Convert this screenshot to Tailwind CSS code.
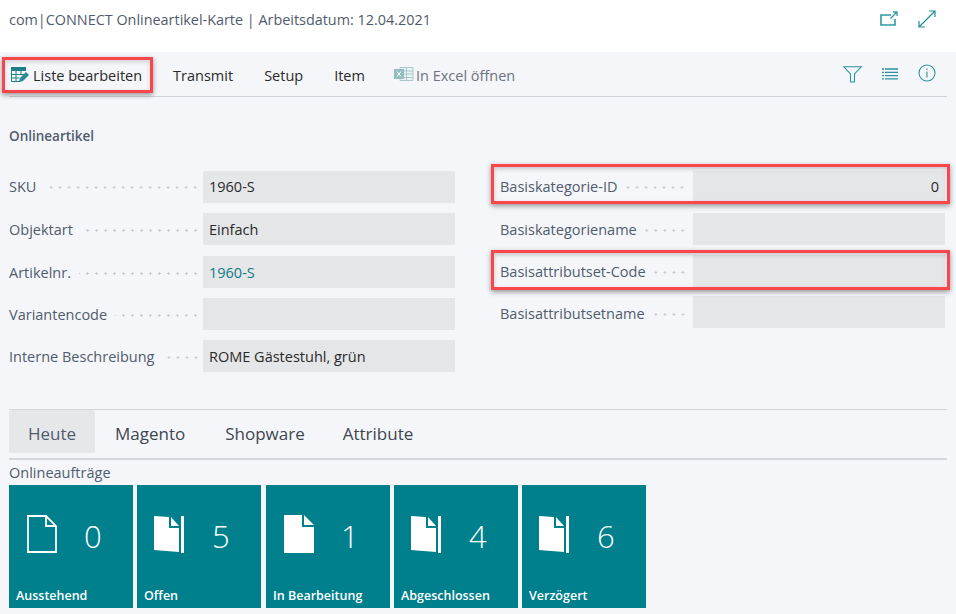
<!DOCTYPE html>
<html lang="de">
<head>
  <meta charset="UTF-8" />
  <title>com|CONNECT Onlineartikel-Karte</title>
  <script src="https://cdn.jsdelivr.net/npm/@tailwindcss/browser@4"></script>
</head>
<body class="relative w-[956px] h-[614px] overflow-hidden bg-[#f5f6f9] font-['Open_Sans','Noto_Sans',sans-serif] text-[14.5px] text-[#2a2a2a]">

<!-- Kopf -->
<header class="h-[52px] bg-white flex items-start justify-between pl-[9px] pr-[20px] pt-[9px]">
  <h1 class="text-[14.400px] leading-[22px] text-[#505c6d]">com|CONNECT Onlineartikel-Karte | Arbeitsdatum: 12.04.2021</h1>
  <div class="flex items-center gap-[20px] pt-[1px]">
    <svg width="18" height="16" viewBox="0 0 18 16" fill="none" stroke="#2f9aa3" stroke-width="1.3">
      <path d="M11 4H1v10h14V8" stroke-width="1.6"/><path d="M10.5 7.5 16.5 1.5M13 1h4v4"/>
    </svg>
    <svg width="18" height="18" viewBox="0 0 18 18" fill="none" stroke="#1f8f99" stroke-width="1.2">
      <path d="M1 17 17 1M11 1h6v6M1 11v6h6"/>
    </svg>
  </div>
</header>

<!-- Aktionsleiste -->
<nav class="mx-[9px] h-[45px] border-b border-[#d0d3da] flex items-center justify-between">
  <div class="flex items-center pt-[3px]">
    <button class="flex items-center gap-[4px] mr-[31px] ml-[2px]">
      <svg width="18" height="16" viewBox="0 0 18 16" fill="none" class="mb-[2px]">
        <path d="M0 0h15v4H0z" fill="#1d7f8b"/>
        <path d="M.5 4v10.500h9M5 4v10.500M10 4v4M.5 7.500h13M.5 11h8" stroke="#1d7f8b"/>
        <path d="M8 15l1-4 6-6 3 3-6 6z" fill="#2b8c96"/>
      </svg>
      <span>Liste bearbeiten</span>
    </button>
    <span class="mr-[31px]">Transmit</span>
    <span class="mr-[31px]">Setup</span>
    <span class="mr-[29px]">Item</span>
    <span class="flex items-center gap-[2px] text-[#6b7480]">
      <svg width="20" height="16" viewBox="0 0 20 16" fill="none" class="mb-[3px]">
        <path d="M6 1.500h13v13H6z" fill="#eef3f3" stroke="#a9c9cb"/>
        <path d="M6 5h13M6 8h13M6 11.500h13M12.500 1.500v13" stroke="#a9c9cb"/>
        <path d="M0 3h10v10H0z" fill="#93bdc0"/>
        <path d="M3 5.500l4 5M7 5.500l-4 5" stroke="#fff"/>
      </svg>
      In Excel öffnen
    </span>
  </div>
  <div class="flex items-center gap-[20px] pr-[11px]">
    <svg width="19" height="17" viewBox="0 0 19 17" fill="none" stroke="#2b939d" stroke-width="1.1">
      <path d="M.8.800h17.400L11.500 8v8H7.500V8z"/>
    </svg>
    <svg width="16" height="12" viewBox="0 0 16 12" fill="none" stroke="#2b939d" stroke-width="1.300">
      <path d="M0 1h2M3 1h13M0 4.300h2M3 4.300h13M0 7.600h2M3 7.600h13M0 10.900h2M3 10.900h13"/>
    </svg>
    <svg width="18" height="18" viewBox="0 0 18 18" fill="none" stroke="#2b939d" stroke-width="1.100" class="mb-[3px]">
      <circle cx="9" cy="9" r="8"/><path d="M9 7.500v6M9 4.500v1.500"/>
    </svg>
  </div>
</nav>

<!-- Formular -->
<main class="px-[9px]">
  <h2 class="mt-[29px] h-[20px] leading-[20px] text-[13.500px] font-semibold text-[#505c6d]">Onlineartikel</h2>
  <div class="grid grid-cols-[446px_445px] gap-x-[45px] mt-[25px]">
    <div class="flex flex-col gap-[10px]">
      <div class="flex h-[32px] items-center">
        <label class="w-[194px] flex items-center gap-[8px] text-[#505c6d]">SKU<span class="flex-1 h-[3px] mr-[3px] bg-[radial-gradient(circle,#c9cdd3_1px,transparent_1.200px)] bg-[length:9px_3px] bg-right bg-repeat-x"></span></label>
        <div class="flex-1 h-full bg-[#e5e6e8] px-[6px] leading-[32px]">1960-S</div>
      </div>
      <div class="flex h-[32px] items-center">
        <label class="w-[194px] pt-[2px] flex items-center gap-[8px] text-[#505c6d]">Objektart<span class="flex-1 h-[3px] mr-[3px] bg-[radial-gradient(circle,#c9cdd3_1px,transparent_1.200px)] bg-[length:9px_3px] bg-right bg-repeat-x"></span></label>
        <div class="flex-1 h-full bg-[#e5e6e8] px-[6px] leading-[34px]">Einfach</div>
      </div>
      <div class="flex h-[32px] items-center mt-[1px]">
        <label class="w-[194px] pt-[2px] flex items-center gap-[8px] text-[#505c6d]">Artikelnr.<span class="flex-1 h-[3px] mr-[3px] bg-[radial-gradient(circle,#c9cdd3_1px,transparent_1.200px)] bg-[length:9px_3px] bg-right bg-repeat-x"></span></label>
        <div class="flex-1 h-full bg-[#e5e6e8] px-[6px] leading-[34px] text-[#0f7c86]">1960-S</div>
      </div>
      <div class="flex h-[32px] items-center">
        <label class="w-[194px] pt-[2px] flex items-center gap-[8px] text-[#505c6d]">Variantencode<span class="flex-1 h-[3px] mr-[3px] bg-[radial-gradient(circle,#c9cdd3_1px,transparent_1.200px)] bg-[length:9px_3px] bg-right bg-repeat-x"></span></label>
        <div class="flex-1 h-full bg-[#e5e6e8]"></div>
      </div>
      <div class="flex h-[32px] items-center">
        <label class="w-[194px] pt-[2px] flex items-center gap-[8px] text-[#505c6d]">Interne Beschreibung<span class="flex-1 h-[3px] mr-[3px] bg-[radial-gradient(circle,#c9cdd3_1px,transparent_1.200px)] bg-[length:9px_3px] bg-right bg-repeat-x"></span></label>
        <div class="flex-1 h-full bg-[#e5e6e8] px-[6px] leading-[34px]">ROME Gästestuhl, grün</div>
      </div>
    </div>
    <div class="flex flex-col gap-[10px]">
      <div class="flex h-[32px] items-center">
        <label class="w-[193px] flex items-center gap-[8px] text-[#505c6d]">Basiskategorie-ID<span class="flex-1 h-[3px] mr-[6px] bg-[radial-gradient(circle,#c9cdd3_1px,transparent_1.200px)] bg-[length:9px_3px] bg-right bg-repeat-x"></span></label>
        <div class="flex-1 h-full bg-[#e5e6e8] px-[6px] leading-[32px] text-right">0</div>
      </div>
      <div class="flex h-[32px] items-center">
        <label class="w-[193px] pt-[2px] flex items-center gap-[8px] text-[#505c6d]">Basiskategoriename<span class="flex-1 h-[3px] mr-[6px] bg-[radial-gradient(circle,#c9cdd3_1px,transparent_1.200px)] bg-[length:9px_3px] bg-right bg-repeat-x"></span></label>
        <div class="flex-1 h-full bg-[#e5e6e8]"></div>
      </div>
      <div class="flex h-[32px] items-center">
        <label class="w-[193px] pt-[2px] flex items-center gap-[8px] text-[#505c6d]">Basisattributset-Code<span class="flex-1 h-[3px] mr-[6px] bg-[radial-gradient(circle,#c9cdd3_1px,transparent_1.200px)] bg-[length:9px_3px] bg-right bg-repeat-x"></span></label>
        <div class="flex-1 h-full bg-[#e5e6e8]"></div>
      </div>
      <div class="flex h-[32px] items-center -mt-[1px]">
        <label class="w-[193px] pt-[4px] flex items-center gap-[8px] text-[#505c6d]">Basisattributsetname<span class="flex-1 h-[3px] mr-[6px] bg-[radial-gradient(circle,#c9cdd3_1px,transparent_1.200px)] bg-[length:9px_3px] bg-right bg-repeat-x"></span></label>
        <div class="flex-1 h-full bg-[#e5e6e8]"></div>
      </div>
    </div>
  </div>

  <!-- Tabs -->
  <div class="mt-[37px] border-t border-[#d5d7dc]">
    <div class="flex h-[50px] border-b-2 border-[#d5d7dc] pb-[5px] text-[17px] text-[#3e4650]">
      <div class="w-[86px] bg-[#e6e7e9] rounded-t-[2px] text-center leading-[48px] text-[#505c6d]">Heute</div>
      <div class="ml-[20px] leading-[48px]">Magento</div>
      <div class="ml-[40px] leading-[48px]">Shopware</div>
      <div class="ml-[38px] leading-[48px]">Attribute</div>
    </div>
  </div>
  <div class="mt-[3px] h-[20px] leading-[20px] text-[14.500px] text-[#505c6d]">Onlineaufträge</div>

  <!-- Kacheln -->
  <div class="mt-[2px] flex gap-[4px] text-white">
    <div class="w-[124px] h-[123px] bg-[#00808c] flex flex-col px-[7px] pb-[3px]">
      <div class="flex items-center h-[100px] pl-[11px] pb-[3px]">
        <svg width="30" height="38" viewBox="0 0 30 38" fill="none" stroke="#fff" stroke-width="1.800"><path d="M1 1h18l10 10v26H1zM19 1v10h10"/></svg>
        <span class="ml-[27px] text-[31px] font-light leading-none pt-[6px]">0</span>
      </div>
      <div class="mt-auto text-[12.500px] font-semibold leading-[18px]">Ausstehend</div>
    </div>
    <div class="w-[124px] h-[123px] bg-[#00808c] flex flex-col px-[7px] pb-[3px]">
      <div class="flex items-center h-[100px] pl-[10px] pb-[3px]">
        <svg width="30" height="38" viewBox="0 0 30 38" fill="#fff"><path d="M0 1l15 1v11h10v24L0 35zM17 2l8 9h-8zM27 1h3v37h-3z"/></svg>
        <span class="ml-[28px] text-[31px] font-light leading-none pt-[6px]">5</span>
      </div>
      <div class="mt-auto text-[12.500px] font-semibold leading-[18px]">Offen</div>
    </div>
    <div class="ml-[1px] w-[124px] h-[123px] bg-[#00808c] flex flex-col px-[7px] pb-[3px]">
      <div class="flex items-center h-[100px] pl-[11px] pb-[3px]">
        <svg width="30" height="38" viewBox="0 0 30 38" fill="#fff"><path d="M0 0h18v12h12v26H0zM20 0l10 10H20z"/></svg>
        <span class="ml-[27px] text-[31px] font-light leading-none pt-[6px]">1</span>
      </div>
      <div class="mt-auto text-[12.500px] font-semibold leading-[18px]">In Bearbeitung</div>
    </div>
    <div class="w-[124px] h-[123px] bg-[#00808c] flex flex-col px-[7px] pb-[3px]">
      <div class="flex items-center h-[100px] pl-[10px] pb-[3px]">
        <svg width="30" height="38" viewBox="0 0 30 38" fill="#fff"><path d="M0 1l15 1v11h10v24L0 35zM17 2l8 9h-8zM27 1h3v37h-3z"/></svg>
        <span class="ml-[28px] text-[31px] font-light leading-none pt-[6px]">4</span>
      </div>
      <div class="mt-auto text-[12.500px] font-semibold leading-[18px]">Abgeschlossen</div>
    </div>
    <div class="w-[124px] h-[123px] bg-[#00808c] flex flex-col px-[7px] pb-[3px]">
      <div class="flex items-center h-[100px] pl-[10px] pb-[3px]">
        <svg width="30" height="38" viewBox="0 0 30 38" fill="#fff"><path d="M0 1l15 1v11h10v24L0 35zM17 2l8 9h-8zM27 1h3v37h-3z"/></svg>
        <span class="ml-[28px] text-[31px] font-light leading-none pt-[6px]">6</span>
      </div>
      <div class="mt-auto text-[12.500px] font-semibold leading-[18px]">Verzögert</div>
    </div>
  </div>
</main>

<!-- rote Markierungen -->
<div class="absolute left-[2px] top-[57px] w-[151px] h-[36px] border-[3px] border-[#f9464a] shadow-[0_2px_5px_rgba(0,0,0,0.4),inset_0_2px_4px_rgba(0,0,0,0.15)]"></div>
<div class="absolute left-[491px] top-[164px] w-[459px] h-[40px] border-[3px] border-[#f9464a] shadow-[0_2px_5px_rgba(0,0,0,0.4),inset_0_2px_4px_rgba(0,0,0,0.2)]"></div>
<div class="absolute left-[491px] top-[250px] w-[459px] h-[40px] border-[3px] border-[#f9464a] shadow-[0_2px_5px_rgba(0,0,0,0.4),inset_0_2px_4px_rgba(0,0,0,0.2)]"></div>
</body>
</html>
